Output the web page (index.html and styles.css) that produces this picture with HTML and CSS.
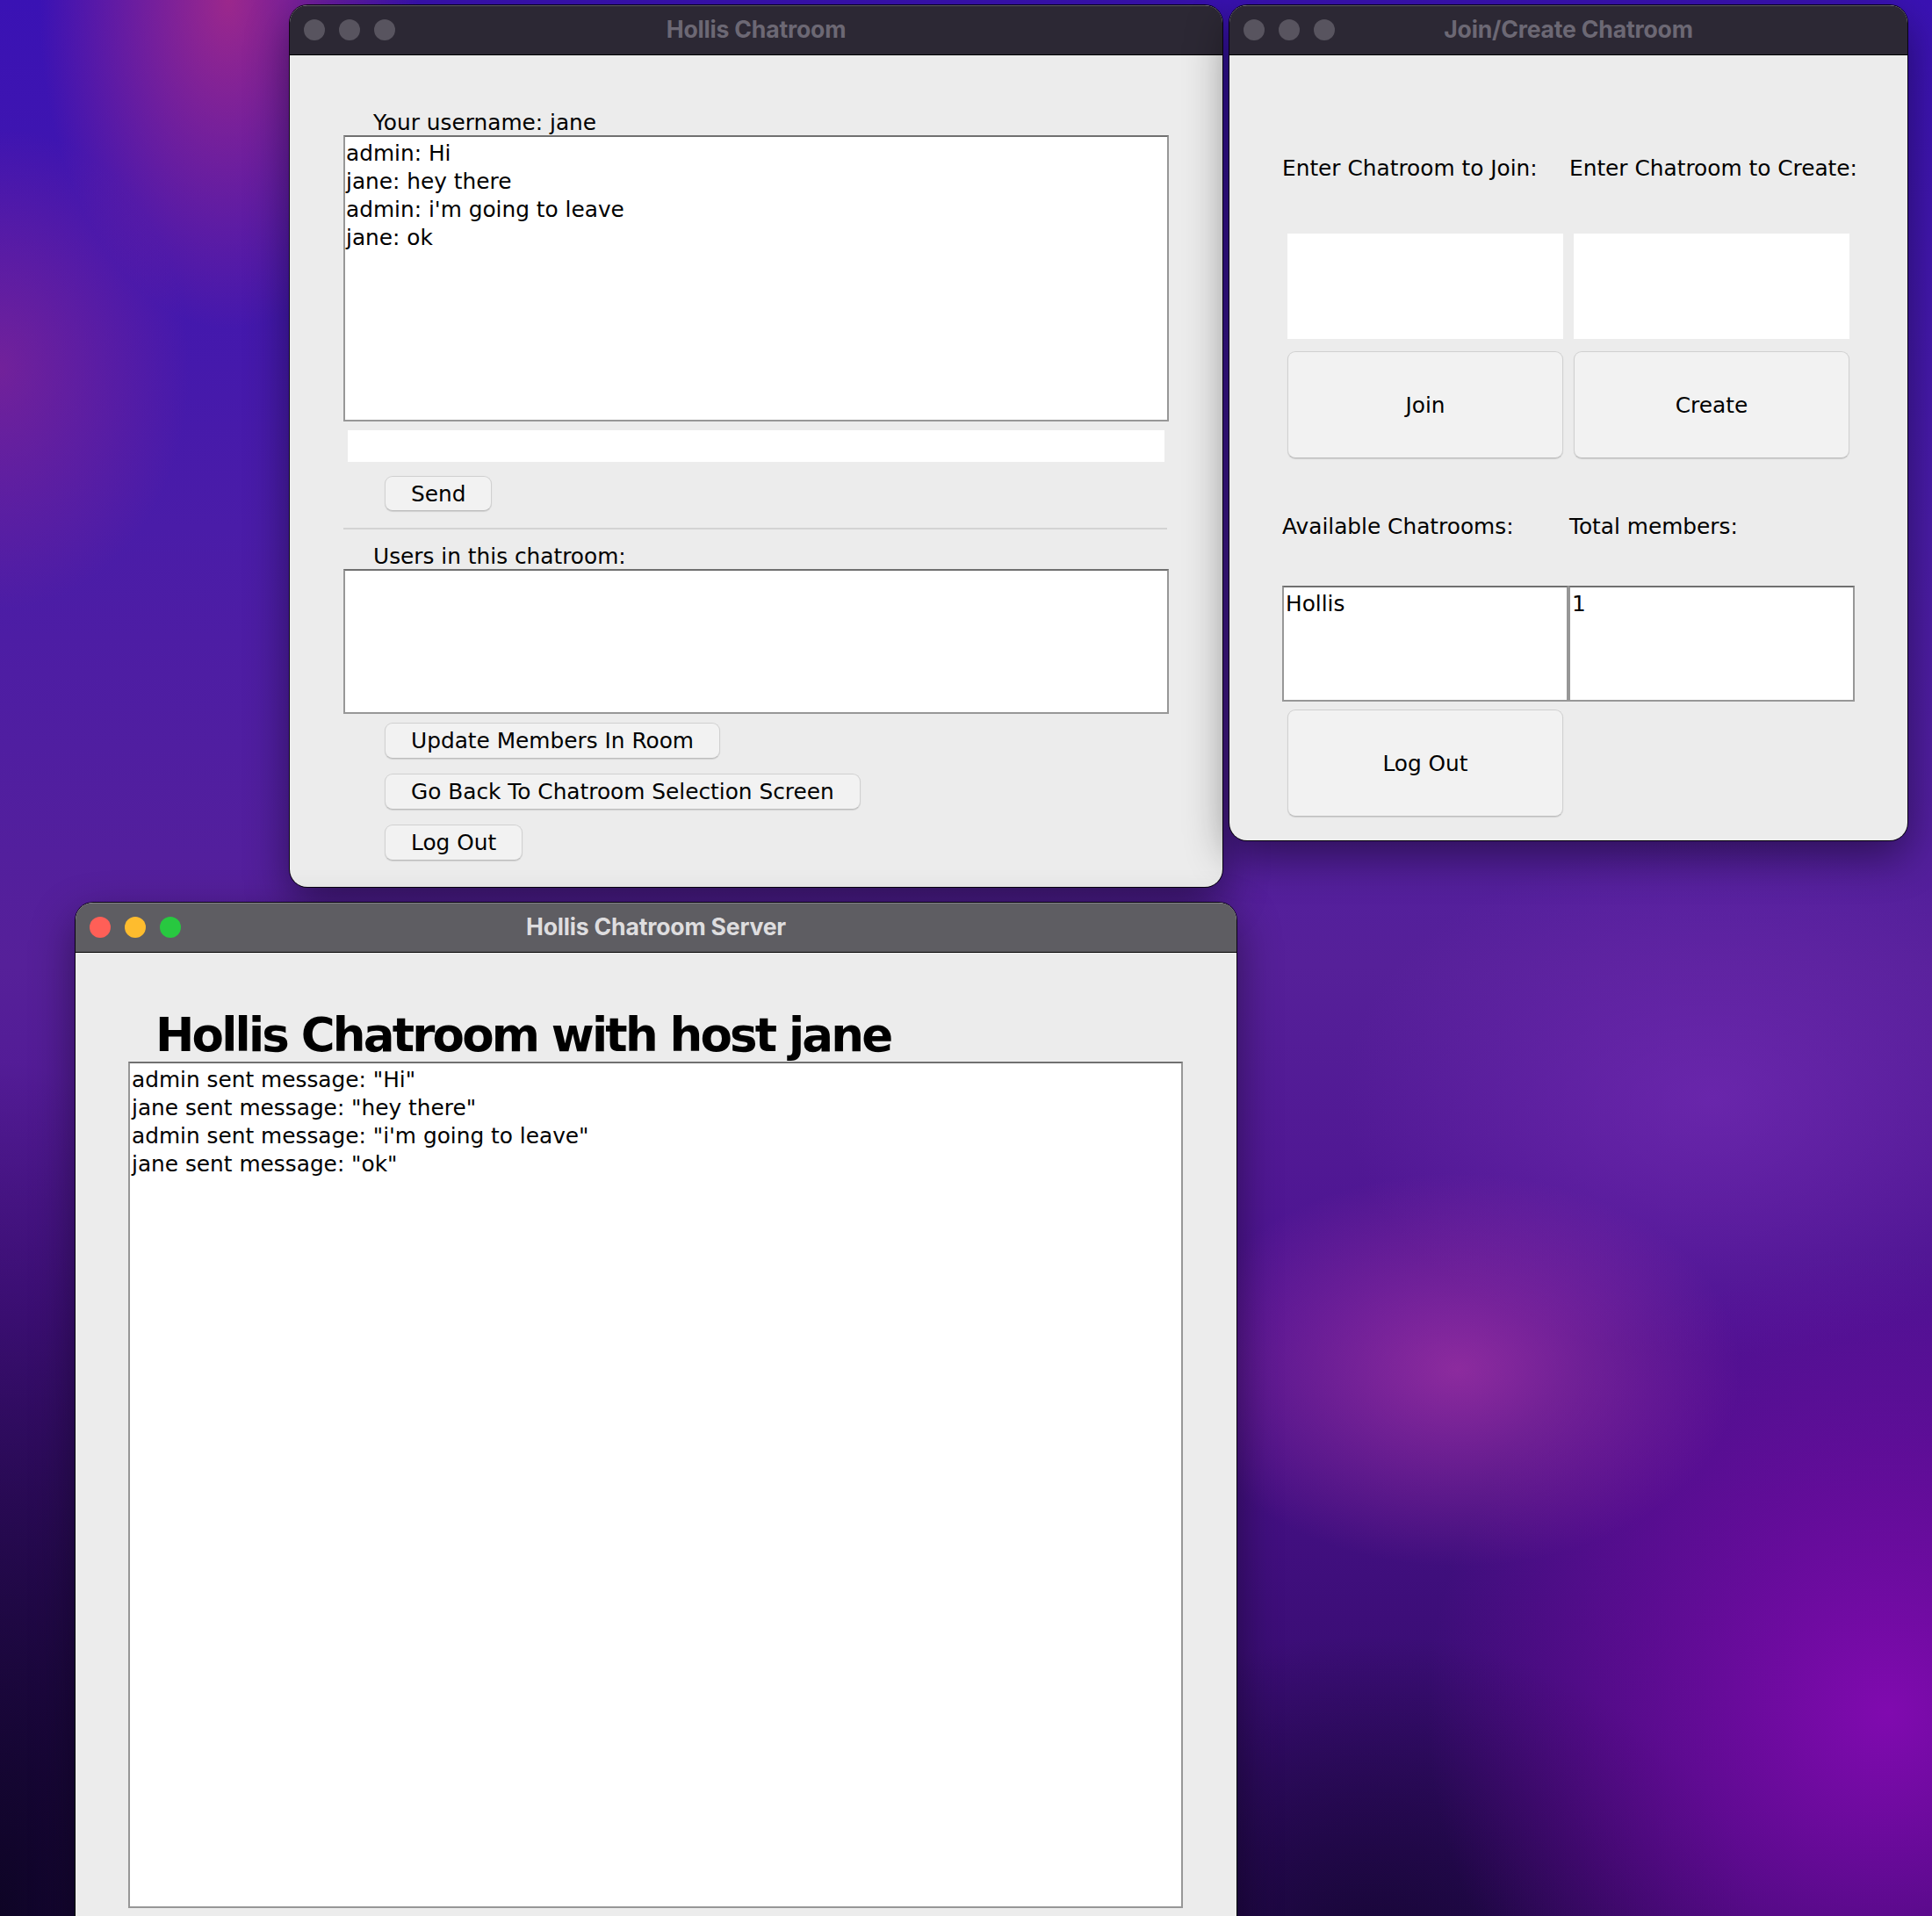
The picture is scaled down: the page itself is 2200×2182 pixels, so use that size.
FILE: index.html
```html
<!DOCTYPE html>
<html lang="en">
<head>
<meta charset="utf-8">
<title>Hollis Chatroom</title>
<link rel="stylesheet" href="styles.css">
</head>
<body>
<div class="desktop">

  <section class="window win-chat">
    <header class="titlebar inactive">
      <div class="lights"><span></span><span></span><span></span></div>
      <div class="title">Hollis Chatroom</div>
    </header>
    <div class="chat-body">
      <div class="label">Your username: jane</div>
      <div class="textbox messages">
        <div>admin: Hi</div>
        <div>jane: hey there</div>
        <div>admin: i'm going to leave</div>
        <div>jane: ok</div>
      </div>
      <div class="field msg-input"></div>
      <div class="btn-col first">
        <button class="btn small">Send</button>
      </div>
      <div class="sep"></div>
      <div class="label label-users">Users in this chatroom:</div>
      <div class="textbox users"></div>
      <div class="btn-col">
        <button class="btn small">Update Members In Room</button>
        <button class="btn small">Go Back To Chatroom Selection Screen</button>
        <button class="btn small">Log Out</button>
      </div>
    </div>
  </section>

  <section class="window win-join">
    <header class="titlebar inactive">
      <div class="lights"><span></span><span></span><span></span></div>
      <div class="title">Join/Create Chatroom</div>
    </header>
    <div class="join-body">
      <div class="cols labels">
        <div class="label-j">Enter Chatroom to Join:</div>
        <div class="label-j">Enter Chatroom to Create:</div>
      </div>
      <div class="cols fields">
        <div class="field big"></div>
        <div class="field big"></div>
      </div>
      <div class="cols buttons">
        <button class="btn big">Join</button>
        <button class="btn big">Create</button>
      </div>
      <div class="cols labels labels-2">
        <div class="label-j">Available Chatrooms:</div>
        <div class="label-j">Total members:</div>
      </div>
      <div class="cols lists">
        <div class="textbox room-list">Hollis</div>
        <div class="textbox room-list">1</div>
      </div>
      <div class="cols buttons logout-row">
        <button class="btn big">Log Out</button>
      </div>
    </div>
  </section>

  <section class="window win-server">
    <header class="titlebar active">
      <div class="lights"><span class="close"></span><span class="min"></span><span class="max"></span></div>
      <div class="title">Hollis Chatroom Server</div>
    </header>
    <div class="server-body">
      <h1 class="server-heading">Hollis Chatroom with host jane</h1>
      <div class="textbox server-log">
        <div>admin sent message: "Hi"</div>
        <div>jane sent message: "hey there"</div>
        <div>admin sent message: "i'm going to leave"</div>
        <div>jane sent message: "ok"</div>
      </div>
    </div>
  </section>

</div>
</body>
</html>
```

FILE: styles.css
```css
* { box-sizing: border-box; }

html, body {
  margin: 0;
  padding: 0;
}

body {
  width: 2200px;
  height: 2182px;
  overflow: hidden;
  font-family: "DejaVu Sans", "Liberation Sans", sans-serif;
  color: #000;
}

.desktop {
  position: relative;
  width: 2200px;
  height: 2182px;
  overflow: hidden;
  background:
    radial-gradient(ellipse 460px 320px at 1660px 1560px, rgba(185, 60, 170, 0.6), rgba(185, 60, 170, 0) 70%),
    radial-gradient(ellipse 700px 700px at 2150px 1950px, rgba(128, 10, 175, 1), rgba(128, 10, 175, 0) 75%),
    radial-gradient(ellipse 560px 460px at 1560px 2230px, rgba(22, 6, 52, 0.95), rgba(22, 6, 52, 0) 80%),
    radial-gradient(ellipse 520px 1300px at 0px 2182px, rgba(12, 4, 34, 0.95), rgba(12, 4, 34, 0) 75%),
    radial-gradient(ellipse 300px 520px at 260px 0px, rgba(180, 45, 130, 0.8), rgba(180, 45, 130, 0) 72%),
    radial-gradient(ellipse 300px 380px at 0px 420px, rgba(150, 40, 140, 0.55), rgba(150, 40, 140, 0) 72%),
    radial-gradient(ellipse 600px 420px at 1950px 1250px, rgba(120, 45, 185, 0.6), rgba(120, 45, 185, 0) 70%),
    linear-gradient(180deg, #3a12b4 0px, #4a1ca8 600px, #562099 1100px, #4c1290 1500px, #2e0a62 2182px);
}

/* ---------- windows ---------- */

.window {
  position: absolute;
  background: #ececec;
  border-radius: 20px;
  overflow: hidden;
  display: flex;
  flex-direction: column;
  box-shadow: 0 0 0 1px rgba(0, 0, 0, 0.85), 0 18px 50px rgba(0, 0, 0, 0.45);
}

.win-chat   { left: 330px;  top: 6px;    width: 1062px; height: 1004px; }
.win-join   { left: 1400px; top: 6px;    width: 772px;  height: 951px; }
.win-server { left: 86px;   top: 1028px; width: 1322px; height: 1260px; }

.titlebar {
  flex: none;
  height: 57px;
  display: grid;
  grid-template-columns: 1fr auto 1fr;
  align-items: center;
  border-bottom: 1px solid #000;
  box-shadow: inset 0 1px 0 rgba(255, 255, 255, 0.22);
}

.titlebar.inactive { background: #2c2834; color: #6c6874; }
.titlebar.active   { background: #5e5d62; color: #dedddf; }

.lights {
  display: flex;
  gap: 16px;
  padding-left: 16px;
}

.lights span {
  width: 24px;
  height: 24px;
  border-radius: 50%;
  background: #58545f;
}

.lights .close { background: #ff5f57; }
.lights .min   { background: #febc2e; }
.lights .max   { background: #28c840; }

.title {
  font-family: "Inter", "Roboto", sans-serif;
  font-weight: 700;
  font-size: 26.6px;
  line-height: 32px;
  letter-spacing: -0.2px;
  margin-top: -2px;
}

/* ---------- shared controls ---------- */

.label,
.label-j {
  font-size: 24.8px;
  line-height: 29px;
  white-space: nowrap;
}

.textbox {
  background: #fff;
  border: 2px solid #979797;
  border-top-color: #707070;
  padding: 3px 1px;
  font-size: 24.8px;
  line-height: 32px;
  white-space: nowrap;
}

.field { background: #fff; }

.btn {
  font-family: "DejaVu Sans", "Liberation Sans", sans-serif;
  font-size: 24.8px;
  color: #000;
  background: #f2f2f2;
  border: 1px solid #d0d0d0;
  border-bottom-color: #bdbdbd;
  box-shadow: 0 1px 1px rgba(0, 0, 0, 0.12);
  padding: 0;
  margin: 0;
}

.btn.small {
  height: 41px;
  padding: 0 29px;
  border-radius: 9px;
}

.btn.big {
  height: 122px;
  border-radius: 9px;
  margin: 0 6px;
}

/* ---------- chat window ---------- */

.chat-body {
  display: flex;
  flex-direction: column;
  padding: 62px 61px 0;
}

.chat-body .label { padding-left: 34px; }

.messages { height: 326px; }

.msg-input {
  height: 36px;
  margin: 10px 5px 0;
}

.btn-col {
  display: flex;
  flex-direction: column;
  align-items: flex-start;
  gap: 17px;
  margin-top: 10px;
  padding-left: 47px;
}

.btn-col.first { margin-top: 16px; }
.btn-col.first .btn { height: 40px; }

.sep {
  height: 2px;
  background: #d3d3d3;
  margin: 19px 2px 0 0;
}

.label-users { margin-top: 16px; }

.users { height: 165px; }

/* ---------- join window ---------- */

.join-body {
  display: flex;
  flex-direction: column;
  padding: 114px 60px 0;
}

.cols {
  display: grid;
  grid-template-columns: 326px 326px;
}

.labels .label-j:nth-child(2) { padding-left: 1px; }

.fields { margin-top: 60px; }
.field.big { height: 120px; margin: 0 6px; }

.buttons { margin-top: 14px; }

.labels-2 { margin-top: 63px; }

.lists { margin-top: 53px; }
.room-list { height: 132px; padding-left: 2px; }

.logout-row { margin-top: 9px; }

/* ---------- server window ---------- */

.server-body {
  display: flex;
  flex-direction: column;
  padding: 64px 61px 0 60px;
}

.server-heading {
  margin: 0;
  padding-left: 31px;
  font-family: "DejaVu Sans", "Liberation Sans", sans-serif;
  font-weight: 700;
  font-size: 53px;
  line-height: 60px;
  letter-spacing: -2.8px;
  white-space: nowrap;
}

.server-log {
  height: 964px;
  padding-left: 2px;
}
```
